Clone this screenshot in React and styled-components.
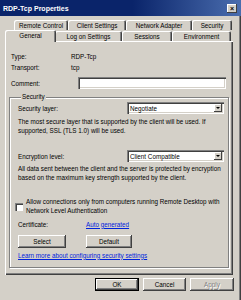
import React from 'react';
import styled, { createGlobalStyle } from 'styled-components';

// Base page
const GlobalStyle = createGlobalStyle`
  html, body {
    margin: 0;
    padding: 0;
    background: #ffffff;
  }
  body {
    font-family: 'Liberation Sans', Arial, sans-serif;
    font-size: 6.3px;
    color: #000000;
  }
`;

const FACE = '#d4d0c8';
const SHADOW = '#808080';
const DARK = '#404040';

const Window = styled.div`
  width: 241px;
  height: 300px;
  box-sizing: border-box;
  background: ${FACE};
  box-shadow: inset -1px 0 ${DARK}, inset -2px 0 ${SHADOW};
  display: flex;
  flex-direction: column;
  overflow: hidden;
`;

const TitleBar = styled.div`
  height: 16px;
  display: flex;
  align-items: center;
  justify-content: space-between;
  padding: 0 4px 0 3px;
  background: linear-gradient(to right, #0a246a 0%, #0a246a 55%, #4a6dae 100%);
`;

const TitleText = styled.span`
  color: #ffffff;
  font-weight: bold;
  font-size: 7px;
`;

const CloseButton = styled.div`
  width: 10px;
  height: 9px;
  box-sizing: border-box;
  background: ${FACE};
  box-shadow: inset -1px -1px ${DARK}, inset 1px 1px #fff;
  display: flex;
  align-items: center;
  justify-content: center;
  font-size: 7px;
  font-weight: bold;
  line-height: 1;
`;

// Tabs
const TabStrip = styled.div`
  margin-top: 4px;
  display: flex;
  flex-direction: column;
`;

const TabRow = styled.div`
  display: flex;
  align-items: flex-end;
  height: ${({ $h }) => $h}px;
  padding-left: ${({ $indent }) => $indent}px;
`;

const Tab = styled.div`
  position: relative;
  width: ${({ $w }) => $w}px;
  height: ${({ $selected }) => ($selected ? 12 : 10)}px;
  box-sizing: border-box;
  display: flex;
  align-items: center;
  justify-content: center;
  background: ${FACE};
  border-radius: 2px 2px 0 0;
  box-shadow: inset 1px 1px #fff, inset -1px 0 ${DARK}, inset -2px 0 ${SHADOW};
  padding-bottom: ${({ $selected }) => ($selected ? 2 : 0)}px;
  margin: ${({ $selected }) => ($selected ? '0 -1px -1px -1px' : '0')};
  z-index: ${({ $selected }) => ($selected ? 2 : 1)};
  white-space: nowrap;
`;

const Panel = styled.div`
  margin-left: 5px;
  width: 228px;
  height: 234px;
  box-sizing: border-box;
  padding: 10px 5px 0 6px;
  box-shadow: inset 1px 1px #fff, inset -1px -1px ${DARK}, inset -2px -2px ${SHADOW};
  display: flex;
  flex-direction: column;
`;

const InfoRow = styled.div`
  display: flex;
  align-items: center;
  height: ${({ $h }) => $h || 11}px;
  margin-top: ${({ $mt }) => $mt || 0}px;
`;

const Label = styled.span`
  width: ${({ $w }) => $w}px;
  flex: none;
  white-space: nowrap;
`;

const TextInput = styled.div`
  width: 148px;
  height: 12px;
  box-sizing: border-box;
  background: #fff;
  box-shadow: inset 1px 1px ${SHADOW}, inset 2px 2px ${DARK}, inset -1px -1px #fff, inset -2px -2px ${FACE};
`;

// Group box
const GroupBox = styled.fieldset`
  margin: 4px -1px 0 -2px;
  padding: 0 4px 8px 8px;
  border: 1px solid ${SHADOW};
  box-shadow: inset 1px 1px #fff, 1px 1px #fff;
  min-width: 0;
  display: flex;
  flex-direction: column;
`;

const Legend = styled.legend`
  margin-left: 3px;
  padding: 0 1px;
  line-height: 8px;
  background: ${FACE};
`;

const FieldRow = styled.div`
  display: flex;
  align-items: center;
  justify-content: space-between;
  height: 12px;
  margin-top: ${({ $mt }) => $mt}px;
`;

const Dropdown = styled.div`
  width: 97px;
  height: 12px;
  box-sizing: border-box;
  background: #fff;
  box-shadow: inset 1px 1px ${SHADOW}, inset 2px 2px ${DARK}, inset -1px -1px #fff, inset -2px -2px ${FACE};
  display: flex;
  align-items: center;
  justify-content: space-between;
  padding: 2px 2px 2px 3px;
`;

const DropArrow = styled.div`
  width: 8px;
  height: 8px;
  box-sizing: border-box;
  background: ${FACE};
  box-shadow: inset -1px -1px ${DARK}, inset 1px 1px #fff;
  display: flex;
  align-items: center;
  justify-content: center;

  &::after {
    content: '';
    border-left: 2px solid transparent;
    border-right: 2px solid transparent;
    border-top: 2px solid #000;
  }
`;

const Para = styled.p`
  margin: ${({ $mt }) => $mt}px 0 0 0;
  line-height: 9px;
  white-space: nowrap;
`;

const CheckRow = styled.div`
  display: flex;
  align-items: center;
  margin: 16px 0 0 -3px;
  line-height: 8.5px;
`;

const CheckBox = styled.div`
  width: 8px;
  height: 8px;
  flex: none;
  box-sizing: border-box;
  background: #fff;
  box-shadow: inset 1px 1px ${SHADOW}, inset 2px 2px ${DARK}, inset -1px -1px #fff;
  margin-right: 3px;
`;

const Link = styled.a`
  color: #0022dd;
  text-decoration: underline;
  white-space: nowrap;
`;

const ButtonRow = styled.div`
  display: flex;
  gap: ${({ $gap }) => $gap}px;
  margin-top: ${({ $mt }) => $mt}px;
  justify-content: ${({ $end }) => ($end ? 'flex-end' : 'flex-start')};
  padding-right: ${({ $end }) => ($end ? 7 : 0)}px;
`;

const Button = styled.div`
  width: ${({ $w }) => $w}px;
  height: 13px;
  box-sizing: border-box;
  display: flex;
  align-items: center;
  justify-content: center;
  background: ${FACE};
  color: ${({ $disabled }) => ($disabled ? SHADOW : '#000')};
  text-shadow: ${({ $disabled }) => ($disabled ? '1px 1px #fff' : 'none')};
  box-shadow: ${({ $default }) =>
    $default
      ? `inset 0 0 0 1px #000, inset -2px -2px ${DARK}, inset 2px 2px #fff, inset -3px -3px ${SHADOW}`
      : `inset -1px -1px ${DARK}, inset 1px 1px #fff, inset -2px -2px ${SHADOW}`};
`;

const backTabs = [
  { label: 'Remote Control', w: 54 },
  { label: 'Client Settings', w: 58 },
  { label: 'Network Adapter', w: 66 },
  { label: 'Security', w: 40 },
];

const frontTabs = [
  { label: 'General', w: 51, selected: true },
  { label: 'Log on Settings', w: 67 },
  { label: 'Sessions', w: 50 },
  { label: 'Environment', w: 59 },
];

function App() {
  return (
    <>
      <GlobalStyle />
      <Window>
        <TitleBar>
          <TitleText>RDP-Tcp Properties</TitleText>
          <CloseButton>×</CloseButton>
        </TitleBar>

        <TabStrip>
          <TabRow $h={10} $indent={14}>
            {backTabs.map((t) => (
              <Tab key={t.label} $w={t.w}>{t.label}</Tab>
            ))}
          </TabRow>
          <TabRow $h={11} $indent={6}>
            {frontTabs.map((t) => (
              <Tab key={t.label} $w={t.w} $selected={t.selected}>{t.label}</Tab>
            ))}
          </TabRow>
        </TabStrip>

        <Panel>
          <InfoRow>
            <Label $w={60}>Type:</Label>
            <span>RDP-Tcp</span>
          </InfoRow>
          <InfoRow>
            <Label $w={60}>Transport:</Label>
            <span>tcp</span>
          </InfoRow>
          <InfoRow $h={12} $mt={4}>
            <Label $w={67}>Comment:</Label>
            <TextInput />
          </InfoRow>

          <GroupBox>
            <Legend>Security</Legend>
            <FieldRow $mt={1}>
              <span>Security layer:</span>
              <Dropdown>
                <span>Negotiate</span>
                <DropArrow />
              </Dropdown>
            </FieldRow>
            <Para $mt={3}>
              The most secure layer that is supported by the client will be used. If
              <br />
              supported, SSL (TLS 1.0) will be used.
            </Para>
            <FieldRow $mt={15}>
              <span>Encryption level:</span>
              <Dropdown>
                <span>Client Compatible</span>
                <DropArrow />
              </Dropdown>
            </FieldRow>
            <Para $mt={2}>
              All data sent between the client and the server is protected by encryption
              <br />
              based on the maximum key strength supported by the client.
            </Para>
            <CheckRow>
              <CheckBox />
              <span>
                Allow connections only from computers running Remote Desktop with
                <br />
                Network Level Authentication
              </span>
            </CheckRow>
            <InfoRow $h={10} $mt={4}>
              <Label $w={68}>Certificate:</Label>
              <Link>Auto generated</Link>
            </InfoRow>
            <ButtonRow $gap={20} $mt={6}>
              <Button $w={48}>Select</Button>
              <Button $w={46}>Default</Button>
            </ButtonRow>
            <InfoRow $h={8} $mt={3}>
              <Link>Learn more about configuring security settings</Link>
            </InfoRow>
          </GroupBox>
        </Panel>

        <ButtonRow $gap={4} $mt={3} $end>
          <Button $w={44} $default>OK</Button>
          <Button $w={43}>Cancel</Button>
          <Button $w={44} $disabled>Apply</Button>
        </ButtonRow>
      </Window>
    </>
  );
}

export default App;
